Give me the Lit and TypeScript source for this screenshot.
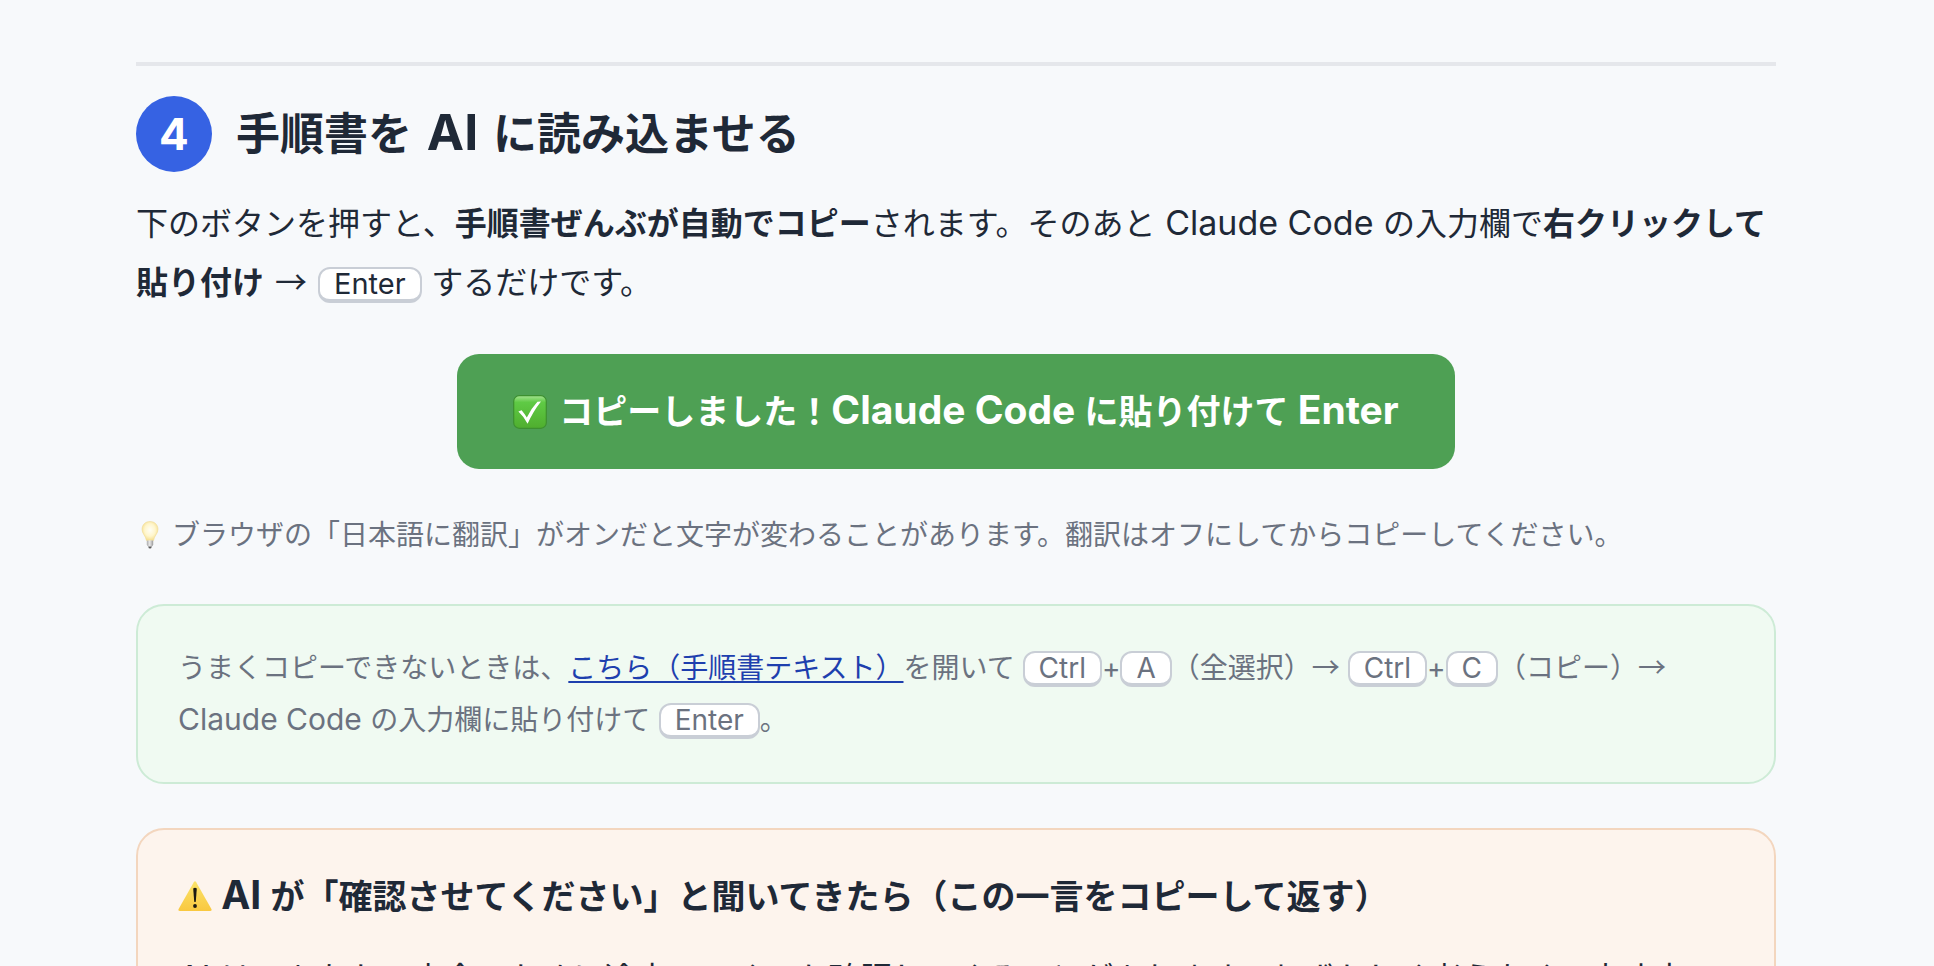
import { LitElement, html, css, svg } from "lit";
import { customElement } from "lit/decorators.js";

const checkIcon = html`<svg class="icon icon-check" viewBox="0 0 34 34" aria-hidden="true">
  ${svg`<defs>
    <linearGradient id="leaf" x1="0" y1="0" x2="0" y2="1">
      <stop offset="0" stop-color="#a5e391"/><stop offset="0.2" stop-color="#5fca45"/><stop offset="1" stop-color="#4fae2e"/>
    </linearGradient>
  </defs>
  <rect x="0.7" y="0.7" width="32.6" height="32.6" rx="5.5" fill="url(#leaf)" stroke="#3d9030" stroke-width="1.2"/>
  <path d="M5.4 16.6 L8.6 15.2 Q11.6 18.6 13.8 22.6 Q18.4 13.2 24.4 6.8 L28 6.4 Q20 16.4 14.6 28.8 Q10.6 21.4 5.4 16.6Z" fill="#fff"/>`}
</svg>`;

const bulbIcon = html`<svg class="icon icon-bulb" viewBox="0 0 28 28" aria-hidden="true">
  ${svg`<defs>
    <radialGradient id="glow" cx="0.5" cy="0.45" r="0.6">
      <stop offset="0" stop-color="#fffef4"/><stop offset="0.55" stop-color="#fff6cc"/><stop offset="1" stop-color="#f3da83"/>
    </radialGradient>
    <linearGradient id="cap" x1="0" x2="1"><stop offset="0" stop-color="#aaa"/><stop offset="0.45" stop-color="#e9e9e9"/><stop offset="1" stop-color="#999"/></linearGradient>
  </defs>
  <path d="M14 0.5 C9.2 0.5 6 4 6 8.4 C6 12.6 9.6 14.4 10.4 19.4 H17.6 C18.4 14.4 22 12.6 22 8.4 C22 4 18.8 0.5 14 0.5Z" fill="url(#glow)" stroke="#f0dc98" stroke-width="0.6"/>
  <path d="M10.8 19.4 H17.2 V23.6 Q17 25 15.8 25.4 H12.2 Q11 25 10.8 23.6Z" fill="url(#cap)"/>
  <path d="M12.2 25.4 H15.8 Q15.4 27.6 14 27.6 Q12.6 27.6 12.2 25.4Z" fill="#5a5a5a"/>`}
</svg>`;

const warnIcon = html`<svg class="icon icon-warn" viewBox="0 0 34 34" aria-hidden="true">
  ${svg`<defs>
    <linearGradient id="amber" x1="0" y1="0" x2="0" y2="1"><stop offset="0" stop-color="#fbe36a"/><stop offset="1" stop-color="#f9c840"/></linearGradient>
  </defs>
  <path d="M15.8 3.2 Q17 1.4 18.2 3.2 L33.4 30 Q34.2 32 32 32 H2 Q-0.2 32 0.6 30Z" fill="url(#amber)"/>
  <path d="M15.2 9.6 Q17 8 18.8 9.6 L17.8 22.6 Q17 23.6 16.2 22.6Z" fill="#1c1a12"/>
  <circle cx="17" cy="27" r="1.9" fill="#1c1a12"/>`}
</svg>`;

@customElement("app-root")
export class AppRoot extends LitElement {
  static styles = css`
    :host {
      display: block;
      box-sizing: border-box;
      min-height: 100vh;
      padding: 62px 22px 40px 0;
      background: #f7f9fb;
      color: #1f2937;
      font-family: Inter, "Noto Sans CJK JP", sans-serif;
      font-size: 32px;
      line-height: 59px;
    }
    .guide {
      max-width: 1640px;
      margin: 0 auto;
    }
    .step {
      border-top: 4px solid #e5e7eb;
      padding-top: 30px;
    }
    .step-title {
      display: flex;
      align-items: center;
      gap: 24px;
      margin: 0 0 22px;
      font-size: 44px;
      line-height: 76px;
      font-weight: 700;
    }
    .num {
      flex: none;
      width: 76px;
      height: 76px;
      border-radius: 50%;
      background: #3662e3;
      color: #fff;
      text-align: center;
    }
    p {
      margin: 0;
    }
    strong {
      font-weight: 700;
    }
    .en {
      font-size: 34px;
      line-height: 1;
    }
    .step-title .en {
      margin: 0 3px;
      font-size: 50px;
    }
    .copy .en,
    .ask-title .en {
      font-size: 39px;
    }
    .muted .en {
      font-size: 30px;
    }
    .arrow {
      margin: 0 2px;
      font-family: "Noto Sans CJK JP", sans-serif;
      line-height: 1;
    }
    .muted .arrow {
      margin: 0;
    }
    kbd {
      display: inline-block;
      box-sizing: border-box;
      height: 36px;
      padding: 0 14px;
      border: 2px solid #c9ced6;
      border-bottom-width: 4px;
      border-radius: 12px;
      background: #fff;
      font-family: inherit;
      font-size: 29px;
      line-height: 30px;
    }
    .muted kbd {
      font-size: 28px;
    }
    .icon {
      display: inline-block;
    }
    .copy-row {
      display: flex;
      justify-content: center;
      margin: 42px 0 40px;
    }
    .copy {
      border: 0;
      border-radius: 22px;
      padding: 28px 56px;
      background: #4ea054;
      color: #fff;
      font: inherit;
      font-size: 34px;
      font-weight: 700;
      cursor: pointer;
    }
    .icon-check {
      width: 34px;
      height: 34px;
      margin-right: 4px;
      vertical-align: -5px;
    }
    .muted {
      color: #6b7280;
      font-size: 28px;
      line-height: 52px;
    }
    .icon-bulb {
      width: 28px;
      height: 28px;
      vertical-align: -4px;
    }
    .box {
      border: 2px solid;
      border-radius: 28px;
      padding: 36px 40px;
    }
    .ok {
      margin: 43px 0 44px;
      border-color: #cdebd6;
      background: #f0faf2;
    }
    .ask {
      border-color: #f3d6be;
      background: #fdf4ed;
    }
    .ask-title {
      margin: 0 0 22px;
      font-size: 34px;
      line-height: 61px;
      font-weight: 700;
    }
    .icon-warn {
      width: 34px;
      height: 34px;
      vertical-align: -4px;
    }
    a {
      color: #1e3fae;
      text-decoration: underline;
      text-decoration-thickness: 2px;
      text-underline-offset: 3px;
      text-decoration-skip-ink: none;
    }
  `;

  render() {
    return html`
      <main class="guide">
        <section class="step">
          <h2 class="step-title"><span class="num">4</span><span>手順書を<span class="en"> AI </span>に読み込ませる</span></h2>
          <p>下のボタンを押すと、<strong>手順書ぜんぶが自動でコピー</strong>されます。そのあと<span class="en"> Claude Code </span>の入力欄で<strong>右クリックして貼り付け</strong> <span class="arrow">→</span> <kbd>Enter</kbd><span class="en"> </span>するだけです。</p>
          <div class="copy-row">
            <button class="copy" type="button">${checkIcon} コピーしました！<span class="en">Claude Code </span>に貼り付けて<span class="en"> Enter</span></button>
          </div>
          <p class="muted">${bulbIcon} ブラウザの「日本語に翻訳」がオンだと文字が変わることがあります。翻訳はオフにしてからコピーしてください。</p>
          <div class="box ok">
            <p class="muted">うまくコピーできないときは、<a href="#manual">こちら（手順書テキスト）</a>を開いて <kbd>Ctrl</kbd>+<kbd>A</kbd>（全選択）<span class="arrow">→</span> <kbd>Ctrl</kbd>+<kbd>C</kbd>（コピー）<span class="arrow">→</span> <span class="en">Claude Code </span>の入力欄に貼り付けて<span class="en"> </span><kbd>Enter</kbd>。</p>
          </div>
          <div class="box ask">
            <h3 class="ask-title">${warnIcon}<span class="en"> AI </span>が「確認させてください」と聞いてきたら（この一言をコピーして返す）</h3>
            <p><span class="en">AI </span>は、あなたの安全のために途中でいくつか確認してくることがあります。むずかしく考えなくて大丈夫です。</p>
          </div>
        </section>
      </main>
    `;
  }
}
